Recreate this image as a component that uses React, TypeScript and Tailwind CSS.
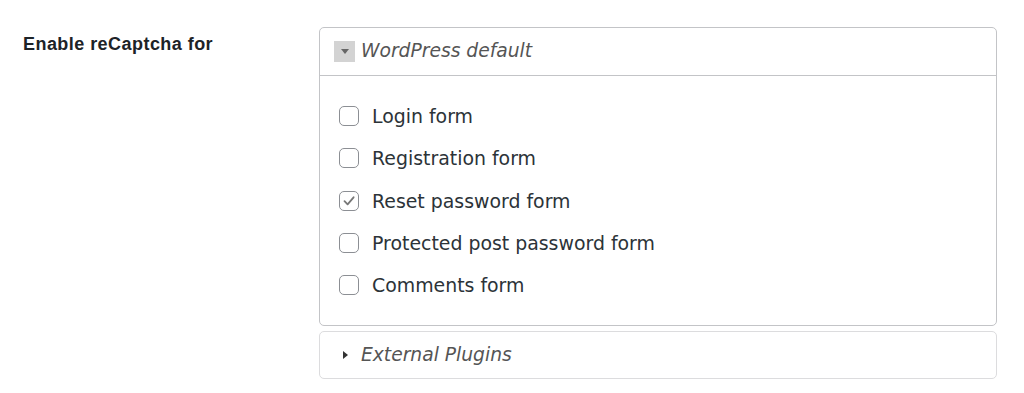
const options = [
  { label: "Login form", checked: false },
  { label: "Registration form", checked: false },
  { label: "Reset password form", checked: true },
  { label: "Protected post password form", checked: false },
  { label: "Comments form", checked: false },
];

const Checkbox = ({ checked }: { checked: boolean }) => (
  <span className="flex h-[20px] w-[20px] shrink-0 items-center justify-center rounded-[5px] border border-[#8c8f94] bg-white">
    {checked && (
      <svg width="14" height="14" viewBox="0 0 14 14" fill="none">
        <path d="M2.5 7.2 L5.6 10.3 L11.6 3.3" stroke="#777" strokeWidth="1.8" strokeLinecap="round" strokeLinejoin="round" />
      </svg>
    )}
  </span>
);

export default function App() {
  return (
    <div className="flex h-[393px] w-[1024px] bg-white pl-[23px] pt-[27px]">
      {/* label */}
      <div className="w-[296px] shrink-0 pt-[4px] font-['Liberation_Sans',Arial,sans-serif] text-[18px] font-bold tracking-[0.45px] text-[#1d2327]">
        Enable reCaptcha for
      </div>

      <div className="flex w-[678px] flex-col gap-[5px] font-['DejaVu_Sans',Verdana,sans-serif]">
        {/* WordPress default */}
        <div className="rounded-[5px] border border-[#c3c4c7] bg-white">
          <div className="flex h-[48px] items-center gap-[6px] border-b border-[#c3c4c7] px-[14px]">
            <span className="flex h-[21px] w-[21px] items-center justify-center bg-[#d3d3d3]">
              <svg width="8" height="5" viewBox="0 0 8 5">
                <path d="M0 0 H8 L4 5 Z" fill="#666" />
              </svg>
            </span>
            <span className="text-[18.7px] italic text-[#555]">WordPress default</span>
          </div>
          <div className="flex flex-col pb-[19px] pl-[19px] pt-[19px]">
            {options.map((o) => (
              <label key={o.label} className="flex h-[42.3px] items-center gap-[13px] text-[18.9px] text-[#2c3338]">
                <Checkbox checked={o.checked} />
                {o.label}
              </label>
            ))}
          </div>
        </div>

        {/* External Plugins */}
        <div className="flex h-[48px] items-center gap-[13px] rounded-[5px] border border-[#dcdcde] bg-white pl-[23px]">
          <svg width="5" height="8" viewBox="0 0 5 8">
            <path d="M0 0 L5 4 L0 8 Z" fill="#333" />
          </svg>
          <span className="text-[18.7px] italic text-[#555]">External Plugins</span>
        </div>
      </div>
    </div>
  );
}
